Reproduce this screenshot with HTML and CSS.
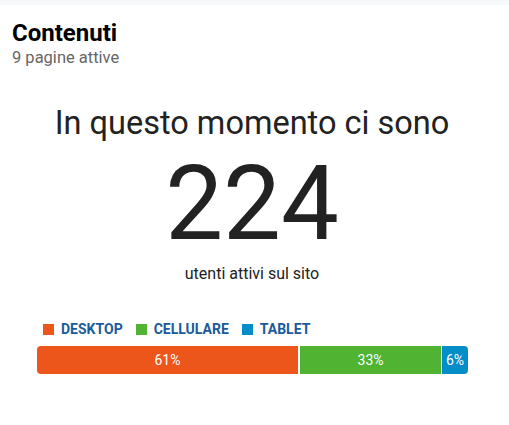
FILE: index.html
```html
<!DOCTYPE html>
<html lang="it">
<head>
    <meta charset="UTF-8">
    <meta name="viewport" content="width=device-width, initial-scale=1.0">
    <title>Contenuti - Tempo reale</title>
    <link rel="stylesheet" href="styles.css">
</head>
<body>
    <div class="top-strip"></div>

    <section class="panel">
        <div class="panel-header">
            <h2>Contenuti</h2>
            <p class="panel-sub">9 pagine attive</p>
        </div>

        <div class="live-users">
            <p class="live-intro">In questo momento ci sono</p>
            <div class="live-count">224</div>
            <p class="live-label">utenti attivi sul sito</p>
        </div>

        <div class="devices">
            <ul class="legend">
                <li><span class="swatch desktop"></span>Desktop</li>
                <li><span class="swatch mobile"></span>Cellulare</li>
                <li><span class="swatch tablet"></span>Tablet</li>
            </ul>

            <div class="stack-bar">
                <div class="segment desktop" style="width: 61%">61%</div>
                <div class="segment mobile" style="width: 33%">33%</div>
                <div class="segment tablet" style="width: 6%">6%</div>
            </div>
        </div>
    </section>
</body>
</html>
```

FILE: styles.css
```css
/* Reset */
* {
    margin: 0;
    padding: 0;
    box-sizing: border-box;
}

body {
    font-family: Roboto, "Liberation Sans", sans-serif;
    color: #222;
    background-color: #fff;
}

.top-strip {
    height: 5px;
    background-color: #f7f8fa;
}

/* Panel */
.panel {
    padding: 0 17px 0 12px;
}

.panel-header {
    padding-top: 14px;
}

.panel-header h2 {
    font-size: 24px;
    font-weight: bold;
    line-height: 28px;
    color: #000;
}

.panel-sub {
    font-size: 16.5px;
    line-height: 21px;
    color: #666;
}

/* Live users */
.live-users {
    text-align: center;
    margin-top: 35px;
}

.live-intro {
    font-size: 32.5px;
    line-height: 40px;
    color: #222;
}

.live-count {
    font-size: 103px;
    line-height: 92px;
    color: #222;
    margin-top: 15px;
}

.live-label {
    font-size: 16px;
    line-height: 20px;
    margin-top: 14px;
}

/* Device breakdown */
.devices {
    margin: 37px 24px 0 25px;
}

.legend {
    list-style: none;
    display: flex;
    gap: 13px;
    padding-left: 6px;
    margin-bottom: 9px;
}

.legend li {
    display: flex;
    align-items: center;
    font-size: 14px;
    font-weight: bold;
    text-transform: uppercase;
    color: #1a5b9b;
}

.swatch {
    width: 11px;
    height: 11px;
    margin-right: 7px;
}

.swatch.desktop,
.segment.desktop {
    background-color: #ed561b;
}

.swatch.mobile,
.segment.mobile {
    background-color: #50b432;
}

.swatch.tablet,
.segment.tablet {
    background-color: #058dc7;
}

.stack-bar {
    display: flex;
    height: 28px;
    border-radius: 4px;
    overflow: hidden;
}

.segment {
    display: flex;
    align-items: center;
    justify-content: center;
    color: #fff;
    font-size: 14px;
    border-right: 1px solid #fff;
}

.segment.desktop {
    border-right-width: 2px;
}

.segment:last-child {
    border-right: none;
}
```
